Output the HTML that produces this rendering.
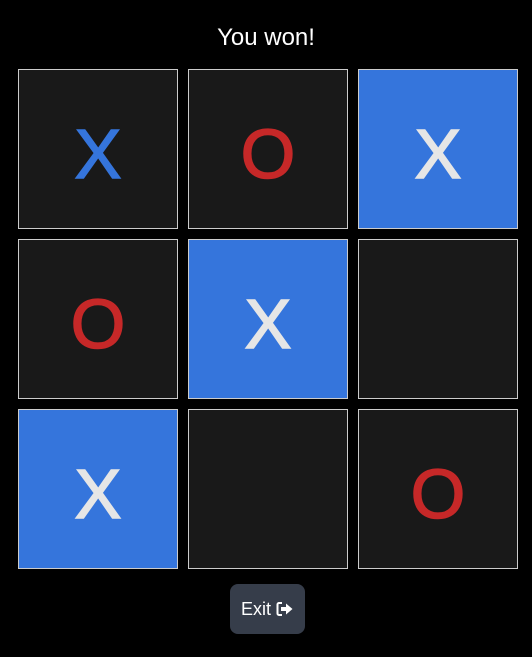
<!DOCTYPE html>
<html><head><style>
body{margin:0;width:532px;height:657px;background:#000;font-family:"Liberation Sans",sans-serif;position:relative;overflow:hidden}
h1{position:absolute;top:22px;left:0;width:532px;margin:0;text-align:center;color:#fff;font-weight:normal;font-size:24px;line-height:32px}
.c{position:absolute;width:158px;height:158px;border:1px solid #ccc;background:#191919;text-align:center;line-height:168px;font-size:70px;-webkit-text-stroke:1.6px currentColor}
.b{color:#3575dc}.r{color:#c62828}.w{background:#3575dc;color:#e6e6e6}
.btn{position:absolute;left:230px;top:584px;width:75px;height:50px;border-radius:8px;background:#363d4a;color:#fff;font-size:18px;line-height:50px;text-align:center}
</style></head><body>
<h1>You won!</h1>
<div class="c b" style="left:18px;top:69px">X</div>
<div class="c r" style="left:188px;top:69px">O</div>
<div class="c w" style="left:358px;top:69px">X</div>
<div class="c r" style="left:18px;top:239px">O</div>
<div class="c w" style="left:188px;top:239px">X</div>
<div class="c" style="left:358px;top:239px"></div>
<div class="c w" style="left:18px;top:409px">X</div>
<div class="c" style="left:188px;top:409px"></div>
<div class="c r" style="left:358px;top:409px">O</div>
<div class="btn">Exit <svg width="18" height="16" viewBox="0 0 18 16" style="vertical-align:-2px"><path d="M6 2H3a1.5 1.5 0 0 0-1.5 1.5v9A1.5 1.5 0 0 0 3 14h3" fill="none" stroke="#fff" stroke-width="2"/><path d="M5 6h5V2.5L16.5 8 10 13.5V10H5z" fill="#fff"/></svg></div>
</body></html>
